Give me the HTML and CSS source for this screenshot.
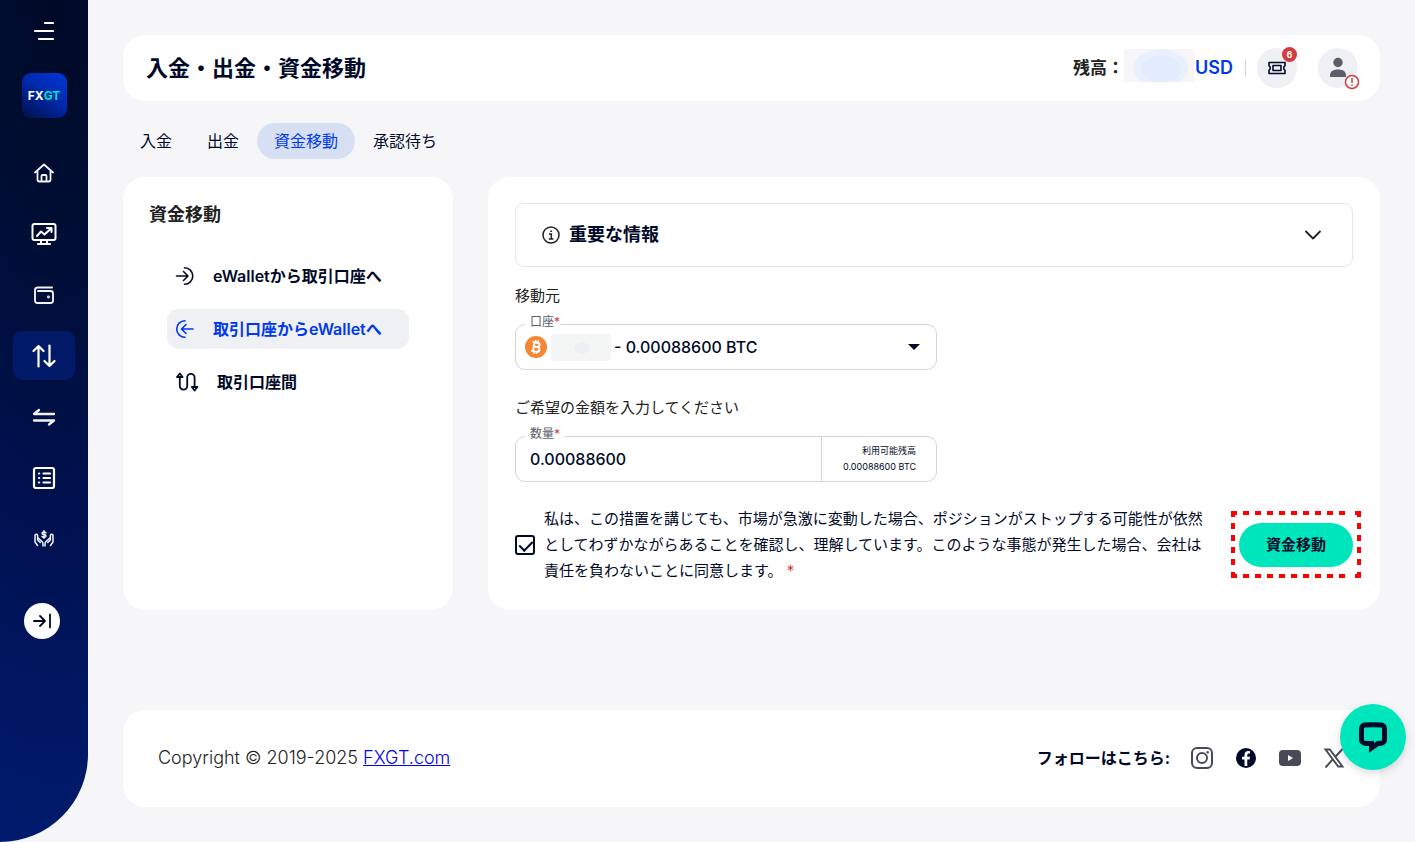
FILE: index.html
```html
<!DOCTYPE html>
<html lang="ja">
<head>
<meta charset="utf-8">
<meta name="viewport" content="width=device-width, initial-scale=1">
<title>入金・出金・資金移動</title>
<link rel="stylesheet" href="styles.css">
</head>
<body>
<div class="app">
  <aside class="sidebar">
    <button class="menu-toggle" type="button" aria-label="メニュー">
      <svg width="24" height="24" viewBox="0 0 24 24" fill="none" stroke="#fff" stroke-width="2.200" stroke-linecap="round"><path d="M13 4h8M3 12h18M7 20h14"/></svg>
    </button>
    <a class="logo" href="#" aria-label="ホーム"><span class="logo-fx">FX</span><span class="logo-gt">GT</span></a>
    <nav class="side-nav">
      <a class="side-link" href="#" aria-label="ダッシュボード">
        <svg width="22" height="22" viewBox="0 0 22 22" fill="none" stroke="#f1f2f6" stroke-width="1.8" stroke-linecap="round" stroke-linejoin="round"><path d="M2 10.500 11 2.500l9 8M4.500 9V17.500a2 2 0 0 0 2 2h9a2 2 0 0 0 2-2V9M8.500 19v-5a1 1 0 0 1 1-1h3a1 1 0 0 1 1 1v5"/></svg>
      </a>
      <a class="side-link" href="#" aria-label="取引">
        <svg width="26" height="24" viewBox="0 0 26 24" fill="none" stroke="#fff" stroke-width="2" stroke-linecap="round" stroke-linejoin="round"><rect x="1.500" y="2" width="23" height="16" rx="2"/><path d="M10 18v3.500M16 18v3.500M7 22h12M6 14l4-4.500 3.500 3L20 6.500M16 6h4.500v4"/></svg>
      </a>
      <a class="side-link" href="#" aria-label="ウォレット">
        <svg width="22" height="20" viewBox="0 0 22 20" fill="none" stroke="#f1f2f6" stroke-width="1.900" stroke-linecap="round" stroke-linejoin="round"><path d="M19 2.500H4.500a2.500 2.500 0 0 0-2.500 2.500v10.500A2.500 2.500 0 0 0 4.500 18h13a2.500 2.500 0 0 0 2.500-2.500V8.500A2.500 2.500 0 0 0 17.500 6H5"/><circle cx="15.500" cy="12" r=".5" fill="#fff"/></svg>
      </a>
      <a class="side-link side-link-active" href="#" aria-label="資金移動">
        <svg width="24" height="24" viewBox="0 0 24 24" fill="none" stroke="#fff" stroke-width="2.200" stroke-linecap="round" stroke-linejoin="round"><path d="M6.500 22.500V2M1.500 7l5-5 5 5M17.500 1.500V22M12.500 17l5 5 5-5"/></svg>
      </a>
      <a class="side-link" href="#" aria-label="振替">
        <svg width="24" height="20" viewBox="0 0 24 20" fill="none" stroke="#f1f2f6" stroke-width="2.300" stroke-linecap="round" stroke-linejoin="round"><path d="M22 7H2l5-4M2 13.500h20l-5 4"/></svg>
      </a>
      <a class="side-link" href="#" aria-label="履歴">
        <svg width="24" height="24" viewBox="0 0 24 24" fill="none" stroke="#fff" stroke-width="2.200" stroke-linecap="round"><rect x="2" y="2" width="20" height="20" rx="2"/><path d="M7 7.500h.2M11.500 7.500H18M7 12h.2M11.500 12H18M7 16.500h.2M11.500 16.500H18"/></svg>
      </a>
      <a class="side-link" href="#" aria-label="パートナー">
        <svg width="22" height="20" viewBox="0 0 22 20" fill="none" stroke="#f1f2f6" stroke-width="1.500" stroke-linecap="round" stroke-linejoin="round"><path d="M4.500 16.500 2 13V6.500a1.300 1.300 0 0 1 2.600 0V11l2.600 2.400M4.600 8.500 9 12.500c.8.700 1 1.500 1 2.500v2M17.500 16.500 20 13V6.500a1.300 1.300 0 0 0-2.600 0V11l-2.600 2.400M17.400 8.500 13 12.500c-.8.700-1 1.500-1 2.500v2M13 3.800c-.4-.6-1.100-.9-2-.9-2.600 0-2.600 2.500 0 2.600 2.600.1 2.600 2.700 0 2.700-.9 0-1.700-.3-2-.9M11 1.700v7.600"/></svg>
      </a>
    </nav>
    <button class="collapse" type="button" aria-label="サイドバーを開く">
      <svg width="20" height="18" viewBox="0 0 20 18" fill="none" stroke="#000a28" stroke-width="1.800" stroke-linecap="round" stroke-linejoin="round"><path d="M2 9h11M8 4l5 5-5 5M18 2.500v13"/></svg>
    </button>
  </aside>

  <main class="main">
    <header class="card topbar">
      <h1 class="page-title">入金・出金・資金移動</h1>
      <div class="account">
        <span class="balance-label">残高：</span>
        <span class="balance-mask"></span>
        <span class="currency">USD</span>
        <span class="divider"></span>
        <button class="round-button" type="button" aria-label="通知">
          <svg width="20" height="14" viewBox="0 0 20 14" fill="none" stroke="#000a28" stroke-width="1.600" stroke-linejoin="round"><path d="M2 1.500h16v3.200c-1.700.6-1.700 4 0 4.600v3.200H2V9.300c1.700-.6 1.700-4 0-4.600z"/><rect x="6" y="4.500" width="8" height="5"/></svg>
          <span class="count">6</span>
        </button>
        <button class="round-button profile" type="button" aria-label="プロフィール">
          <svg width="20" height="22" viewBox="0 0 20 22" fill="#5c5f6b"><circle cx="10" cy="5.500" r="4.700"/><path d="M2 20v-1.500C2 14.500 5 12.500 10 12.500s8 2 8 6V20z"/></svg>
          <svg class="alert" width="16" height="16" viewBox="0 0 16 16" fill="#fff" stroke="#d63b3b" stroke-width="1.500"><circle cx="8" cy="8" r="6.500"/><path d="M8 4v5M8 10.500V12"/></svg>
        </button>
      </div>
    </header>

    <nav class="tabs">
      <a class="tab" href="#">入金</a>
      <a class="tab" href="#">出金</a>
      <a class="tab tab-active" href="#">資金移動</a>
      <a class="tab" href="#">承認待ち</a>
    </nav>

    <div class="columns">
      <section class="card transfer-menu">
        <h2 class="menu-title">資金移動</h2>
        <nav class="menu-list">
          <a class="menu-item" href="#">
            <svg width="20" height="20" viewBox="0 0 20 20" fill="none" stroke="#000a28" stroke-width="1.600" stroke-linecap="round" stroke-linejoin="round"><path d="M1.500 10h11M8.500 5.500 13 10l-4.500 4.500M9.500 1.700a8.300 8.300 0 0 1 0 16.600"/></svg>
            <span>eWalletから取引口座へ</span>
          </a>
          <a class="menu-item menu-item-active" href="#">
            <svg width="20" height="20" viewBox="0 0 20 20" fill="none" stroke="#0038eb" stroke-width="1.600" stroke-linecap="round" stroke-linejoin="round"><path d="M18 10H7M11 5.500 6.500 10l4.500 4.500M10 1.700a8.300 8.300 0 0 0 0 16.600"/></svg>
            <span>取引口座からeWalletへ</span>
          </a>
          <a class="menu-item" href="#">
            <svg width="24" height="20" viewBox="0 0 24 20" fill="none" stroke="#000a28" stroke-width="1.800" stroke-linecap="round" stroke-linejoin="round"><path d="M4.800 5v9a3.700 3.700 0 0 0 7.400 0V5.500a3.700 3.700 0 0 1 7.400 0V15M2 5l2.800-3.500L7.600 5zM16.800 15h5.600l-2.800 3.500z"/></svg>
            <span>取引口座間</span>
          </a>
        </nav>
      </section>

      <form class="card transfer-form">
        <button class="notice" type="button" aria-expanded="false">
          <svg width="18" height="18" viewBox="0 0 18 18" fill="none" stroke="#222" stroke-width="1.500"><circle cx="9" cy="9" r="8"/><path d="M7 8h2.300v5M6.800 13h4.600M8.300 5.200h1.700"/></svg>
          <span class="notice-title">重要な情報</span>
          <svg width="18" height="12" viewBox="0 0 18 12" fill="none" stroke="#222" stroke-width="1.800" stroke-linecap="round" stroke-linejoin="round"><path d="M2 2.500 9 9.500l7-7"/></svg>
        </button>

        <p class="section-label">移動元</p>
        <div class="field">
          <label class="field-label" for="account">口座<span class="required">*</span></label>
          <svg class="coin" width="22" height="22" viewBox="0 0 22 22"><circle cx="11" cy="11" r="11" fill="#f58634"/><g fill="none" stroke="#fff" stroke-width="2" transform="rotate(9 11 11)"><path d="M6.800 6.500h5.200a2.200 2.200 0 0 1 0 4.400H8.800M8.800 10.900h3.700a2.300 2.300 0 0 1 0 4.600H6.800M8.800 6.500v9"/><path stroke-width="1.400" d="M9.800 4v2.500M12.300 4v2.500M9.800 15.500V18M12.300 15.500V18"/></g></svg>
          <span class="account-mask"></span>
          <select class="account-select" id="account"><option>- 0.00088600 BTC</option></select>
          <svg class="caret" width="12" height="6" viewBox="0 0 12 6" fill="#000a28"><path d="M0 0h12L6 6z"/></svg>
        </div>

        <p class="section-label section-label-next">ご希望の金額を入力してください</p>
        <div class="field">
          <label class="field-label field-label-wide" for="amount">数量<span class="required">*</span></label>
          <input class="amount" id="amount" type="text" value="0.00088600">
          <div class="available"><span>利用可能残高</span><span>0.00088600 BTC</span></div>
        </div>

        <div class="consent">
          <input class="check" id="agree" type="checkbox" checked>
          <label class="consent-text" for="agree">私は、この措置を講じても、市場が急激に変動した場合、ポジションがストップする可能性が依然<br>としてわずかながらあることを確認し、理解しています。このような事態が発生した場合、会社は<br>責任を負わないことに同意します。 <span class="required">*</span></label>
          <div class="submit-wrap">
            <button class="submit" type="button">資金移動</button>
            <svg class="highlight" width="130" height="67" viewBox="0 0 130 67" fill="none" stroke="#f00" stroke-width="4" stroke-dasharray="6 6"><path d="M0 2h118M0 65h118M2 0v56M128 0v56"/><path stroke-dasharray="none" d="M124 2h6M124 65h6M2 61v6M128 61v6"/></svg>
          </div>
        </div>
      </form>
    </div>

    <footer class="card footer">
      <p class="copyright">Copyright © 2019-2025 <a href="#">FXGT.com</a></p>
      <div class="social">
        <span class="social-label">フォローはこちら:</span>
        <a class="social-link" href="#" aria-label="Instagram"><svg width="24" height="24" viewBox="0 0 24 24" fill="none" stroke="#484b57" stroke-width="2"><rect x="2" y="2" width="20" height="20" rx="5"/><circle cx="12" cy="12" r="5"/><circle cx="17.700" cy="6.300" r="1.200" fill="#484b57" stroke="none"/></svg></a>
        <a class="social-link" href="#" aria-label="Facebook"><svg width="24" height="24" viewBox="0 0 24 24"><circle cx="12" cy="12" r="10" fill="#000a28"/><path fill="#fff" d="M10.500 20v-6.500H8v-2.800h2.500V9c0-2.700 1.500-4 3.800-4 .7 0 1.200.1 1.700.2v2.400h-1.200c-1.100 0-1.500.6-1.500 1.500v1.600H16l-.4 2.800h-2.300V20z"/></svg></a>
        <a class="social-link" href="#" aria-label="YouTube"><svg width="24" height="24" viewBox="0 0 24 24"><rect x="1" y="4" width="22" height="16" rx="4" fill="#484b57"/><path d="m10 9 5 3-5 3z" fill="#fff"/></svg></a>
        <a class="social-link" href="#" aria-label="X"><svg width="24" height="24" viewBox="0 0 24 24" fill="none" stroke="#484b57" stroke-width="1.900"><path d="M3.500 3.500h4.300l12.700 17h-4.300zM20.500 3 13.200 11M10.600 13.500 3.500 21.500"/></svg></a>
      </div>
    </footer>
  </main>
</div>
<button class="chat" type="button" aria-label="チャット">
  <svg width="32" height="32" viewBox="0 0 32 32" fill="none" stroke="#000a28" stroke-width="5" stroke-linejoin="miter"><path d="M14.500 27V22.500q-4 0-6.800-.3a3.500 3.500 0 0 1-3.200-3.500V7.500A3.500 3.500 0 0 1 7.700 4q8.300-.7 16.600 0a3.500 3.500 0 0 1 3.200 3.500v11.200a3.500 3.500 0 0 1-3.200 3.500l-3.300.3z"/></svg>
</button>
</body>
</html>
```
FILE: styles.css
```css
* {
  box-sizing: border-box;
}

body {
  margin: 0;
  background: #f6f6f9;
  color: #000a28;
  font-family: Inter, "Noto Sans CJK JP", sans-serif;
  font-size: 16px;
  line-height: 24px;
}

button,
input,
select {
  margin: 0;
  padding: 0;
  border: 0;
  background: none;
  color: inherit;
  font: inherit;
}

button {
  cursor: pointer;
}

h1,
h2,
p {
  margin: 0;
}

svg {
  display: block;
  flex: none;
}

.app {
  display: flex;
  min-height: 100vh;
}

/* Sidebar */
.sidebar {
  flex: 0 0 88px;
  display: flex;
  flex-direction: column;
  align-items: center;
  padding: 19px 0 40px;
  border-bottom-right-radius: 88px;
  background: radial-gradient(ellipse 280px 840px at 55px 0, #000a26, #000d34 28%, #001150 62%, #001b6c);
}

.logo {
  display: flex;
  align-items: center;
  justify-content: center;
  width: 45px;
  height: 45px;
  margin: 30px 0;
  border-radius: 9px;
  background: linear-gradient(35deg, #001048, #0029ad 55%, #0038d8);
  font-size: 12px;
  font-weight: 700;
  text-decoration: none;
}

.logo-fx {
  color: #fff;
}

.logo-gt {
  color: #00e6bc;
}

.side-nav {
  display: grid;
  gap: 12px;
}

.side-link {
  display: flex;
  align-items: center;
  justify-content: center;
  width: 62px;
  height: 49px;
  border-radius: 9px;
}

.side-link-active {
  background: #001a68;
}

.collapse {
  display: flex;
  align-items: center;
  justify-content: center;
  width: 36px;
  height: 36px;
  margin: 40px 5px 0 0;
  border-radius: 50%;
  background: #fff;
}

/* Main area */
.main {
  flex: 1;
  min-width: 0;
  padding: 35px;
}

.card {
  border-radius: 22px;
  background: #fff;
}

.topbar {
  display: flex;
  align-items: center;
  justify-content: space-between;
  padding: 13px 22px 13px 23px;
}

.page-title {
  font-size: 22px;
  font-weight: 700;
}

.account {
  display: flex;
  align-items: center;
}

.balance-label {
  color: #222;
  font-size: 17px;
  font-weight: 700;
}

.balance-mask {
  width: 70px;
  height: 33px;
  margin: -6px 1px 0 0;
  background: radial-gradient(ellipse 20px 14px at 37px 20px, #e3ecfc 96%, transparent), radial-gradient(ellipse 28px 19px at 37px 19px, #e9f0fd 96%, transparent), #f6f6f9;
}

.currency {
  color: #0038eb;
  font-size: 18px;
  font-weight: 600;
}

.divider {
  width: 1px;
  height: 18px;
  margin: 0 11px 0 12px;
  background: #d2d4da;
}

.round-button {
  position: relative;
  display: flex;
  align-items: center;
  justify-content: center;
  width: 40px;
  height: 40px;
  border-radius: 50%;
  background: #eff0f4;
}

.profile {
  margin-left: 21px;
}

.count {
  position: absolute;
  top: -1px;
  right: 0;
  width: 15px;
  height: 15px;
  border-radius: 50%;
  background: #d63b3b;
  color: #fff;
  font-size: 9px;
  font-weight: 700;
  line-height: 15px;
  text-align: center;
}

.alert {
  position: absolute;
  right: -2px;
  bottom: -2px;
}

.tabs {
  display: flex;
  gap: 1px;
  margin: 22px 0 18px;
}

.tab {
  padding: 6px 17px;
  border-radius: 18px;
  color: #000a28;
  text-decoration: none;
}

.tab-active {
  background: #d7e0f3;
  color: #0038eb;
}

.columns {
  display: flex;
  gap: 35px;
}

/* Transfer menu */
.transfer-menu {
  flex: 0 0 330px;
  padding: 25px 44px;
}

.menu-title {
  margin: 0 0 28px -18px;
  color: #222;
  font-size: 18px;
  font-weight: 700;
  line-height: 26px;
}

.menu-list {
  display: grid;
  gap: 13px;
}

.menu-item {
  display: flex;
  align-items: center;
  gap: 18px;
  padding: 8px;
  border-radius: 12px;
  color: #000a28;
  font-weight: 600;
  text-decoration: none;
  white-space: nowrap;
}

.menu-item-active {
  background: #eff0f4;
  color: #0038eb;
}

/* Transfer form */
.transfer-form {
  flex: 1;
  min-width: 0;
  padding: 26px 27px;
}

.notice {
  display: flex;
  align-items: center;
  gap: 9px;
  width: 100%;
  padding: 19px 30px 19px 26px;
  border: 1px solid #e6e6e8;
  border-radius: 9px;
  text-align: left;
}

.notice-title {
  flex: 1;
  font-size: 18px;
  font-weight: 700;
}

.section-label {
  margin: 17px 0 16px;
  color: #222;
  font-size: 15px;
}

.section-label-next {
  margin-top: 26px;
}

.field {
  position: relative;
  display: flex;
  align-items: center;
  width: 100%;
  max-width: 422px;
  height: 46px;
  border: 1px solid #d4d5d8;
  border-radius: 10px;
}

.field-label {
  position: absolute;
  top: -11px;
  left: 9px;
  padding: 0 0 0 5px;
  background: #fff;
  color: #5c5f6b;
  font-size: 12px;
  line-height: 16px;
}

.field-label-wide {
  padding-right: 5px;
}

.required {
  color: #d63b3b;
}

.coin {
  margin-left: 9px;
}

.account-mask {
  width: 60px;
  height: 27px;
  margin-left: 4px;
  border-radius: 3px;
  background: radial-gradient(ellipse 8px 6px at 31px 14px, #eeeff3 90%, transparent), #f4f5f5;
}

.account-select {
  flex: 1;
  min-width: 0;
  height: 44px;
  padding-left: 3px;
  appearance: none;
  font-weight: 500;
}

.caret {
  position: absolute;
  right: 16px;
  pointer-events: none;
}

.amount {
  flex: 1;
  min-width: 0;
  height: 44px;
  padding-left: 14px;
  font-weight: 500;
}

.available {
  display: grid;
  align-content: center;
  flex: 0 0 115px;
  height: 44px;
  padding-right: 20px;
  border-left: 1px solid #d4d5d8;
  font-size: 9px;
  line-height: 16px;
  text-align: right;
}

.consent {
  display: flex;
  align-items: center;
  margin-top: 24px;
}

.check {
  position: relative;
  flex: none;
  width: 20px;
  height: 20px;
  appearance: none;
  border: 2px solid #000a28;
  border-radius: 3px;
}

.check:checked::after {
  content: "";
  position: absolute;
  top: 1px;
  left: 5px;
  width: 6px;
  height: 11px;
  border: solid #000a28;
  border-width: 0 2px 2px 0;
  transform: rotate(45deg);
}

.consent-text {
  flex: 1;
  margin: 0 12px 0 9px;
  font-size: 15px;
  line-height: 26px;
}

.submit-wrap {
  position: relative;
}

.submit {
  width: 114px;
  height: 44px;
  border-radius: 22px;
  background: #00e6bc;
  font-size: 15px;
  font-weight: 700;
}

.highlight {
  position: absolute;
  top: -12px;
  left: -8px;
  pointer-events: none;
}

/* Footer */
.footer {
  display: flex;
  align-items: center;
  justify-content: space-between;
  margin-top: 100px;
  padding: 36px 34px 37px 35px;
}

.copyright {
  color: #222;
  font-size: 18px;
  font-weight: 300;
}

.copyright a {
  color: #00e;
}

.social {
  display: flex;
  align-items: center;
  gap: 20px;
}

.social-label {
  font-weight: 700;
}

/* Chat launcher */
.chat {
  position: fixed;
  right: 9px;
  bottom: 72px;
  display: flex;
  align-items: center;
  justify-content: center;
  width: 66px;
  height: 66px;
  border-radius: 50%;
  background: #00e6bc;
  box-shadow: 0 3px 8px rgba(0, 0, 0, 0.15);
}
```
